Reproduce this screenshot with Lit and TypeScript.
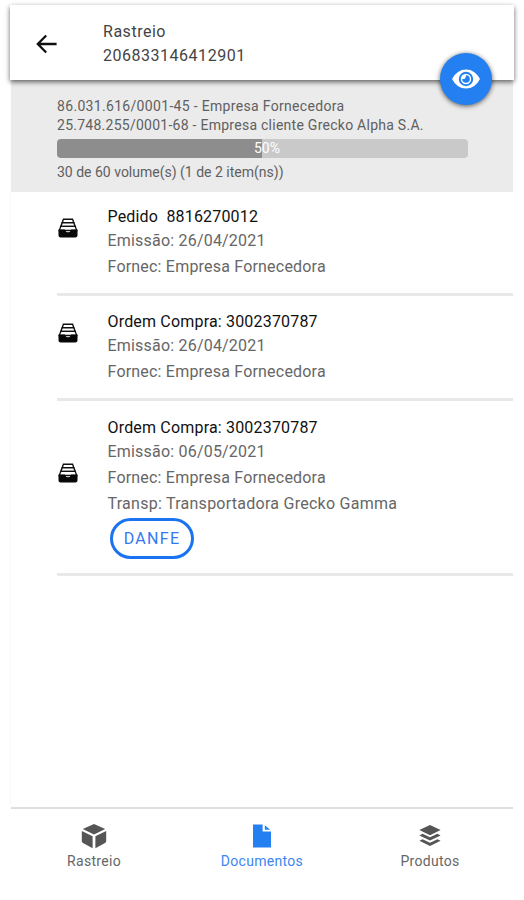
import { LitElement, html, css, svg, nothing } from "lit";
import { customElement, property } from "lit/decorators.js";
import { classMap } from "lit/directives/class-map.js";

interface Doc {
  title: string;
  lines: string[];
  action?: string;
}

const documents: Doc[] = [
  {
    title: "Pedido\u00a0 8816270012",
    lines: ["Emissão: 26/04/2021", "Fornec: Empresa Fornecedora"],
  },
  {
    title: "Ordem Compra: 3002370787",
    lines: ["Emissão: 26/04/2021", "Fornec: Empresa Fornecedora"],
  },
  {
    title: "Ordem Compra: 3002370787",
    lines: [
      "Emissão: 06/05/2021",
      "Fornec: Empresa Fornecedora",
      "Transp: Transportadora Grecko Gamma",
    ],
    action: "DANFE",
  },
];

const cube = svg`
  <path d="M13 0.9 24.2 6.1 13 11.5 1.8 6.1Z"/>
  <path d="M0.8 8 11.6 13.3V25.2L2 20.1Q0.8 19.4 0.8 18Z"/>
  <path d="M25.2 8 14.4 13.3V25.2L24 20.1Q25.2 19.4 25.2 18Z"/>`;

const page = svg`
  <path d="M4 1.5H13.6V8.4H22V24.5H4Z"/>
  <path d="M15.8 2.2 21.2 6.8H15.8Z"/>`;

const layers = svg`
  <path d="M13 2 23.6 7 13 12.2 2.4 7Z"/>
  <path d="M2.4 12.4 5.6 10.8 13 14.3 20.4 10.8 23.6 12.4 13 17.6Z"/>
  <path d="M2.4 17.8 5.6 16.2 13 19.7 20.4 16.2 23.6 17.8 13 23Z"/>`;

@customElement("doc-item")
export class DocItem extends LitElement {
  @property({ attribute: false }) doc!: Doc;

  static styles = css`
    :host {
      display: flex;
      align-items: center;
      margin-left: 46px;
      padding: 14.5px 0 13px;
      border-bottom: 3px solid #e8e8e8;
    }
    .tray {
      flex: none;
      width: 20px;
      height: 20px;
      margin: 0 29.5px 29px 1px;
    }
    .title {
      height: 23px;
      line-height: 23px;
      color: #111;
      letter-spacing: 0.18px;
    }
    .line {
      height: 26px;
      line-height: 26px;
      color: #666;
      letter-spacing: 0.2px;
    }
    .line:nth-child(4) {
      letter-spacing: 0.26px;
    }
    .action {
      display: block;
      box-sizing: border-box;
      width: 84px;
      height: 41px;
      margin: 1px 0 1px 2px;
      padding: 0 0 0 1px;
      border: 3px solid #1a73f0;
      border-radius: 21px;
      background: #fff;
      color: #3478f0;
      font: 16px Roboto, sans-serif;
      letter-spacing: 1.3px;
    }
  `;

  render() {
    const { title, lines, action } = this.doc;
    return html`
      <svg class="tray" viewBox="0 0 20 20">
        <path d="M5.4 1.2H14.6L15.8 4.7H4.2Z" fill="#fff" stroke="#111" stroke-width="1.4" />
        <path d="M4.2 4.7H15.8L17.2 8.4H2.8Z" fill="#fff" stroke="#111" stroke-width="1.4" />
        <path d="M2.8 8.4H17.2L18.8 12.5H1.2Z" fill="#fff" stroke="#111" stroke-width="1.3" />
        <path d="M0.5 11.4H6.8Q7.6 14.2 10 14.2T13.2 11.4H19.5V17.6Q19.5 19.4 17.7 19.4H2.3Q0.5 19.4 0.5 17.6Z" fill="#080808" />
      </svg>
      <div>
        <div class="title">${title}</div>
        ${lines.map((l) => html`<div class="line">${l}</div>`)}
        ${action ? html`<button class="action">${action}</button>` : nothing}
      </div>
    `;
  }
}

@customElement("app-root")
export class AppRoot extends LitElement {
  static styles = css`
    :host {
      display: flex;
      flex-direction: column;
      box-sizing: border-box;
      height: 900px;
      padding: 5px 10px 0;
      background: #fff;
      font: 16px Roboto, sans-serif;
      overflow: hidden;
    }
    .header {
      position: relative;
      z-index: 1;
      display: flex;
      align-items: center;
      flex: none;
      height: 75px;
      background: #fff;
      box-shadow: 0 2px 5px rgba(0, 0, 0, 0.6);
      color: #444;
    }
    .back {
      width: 22px;
      height: 20px;
      margin: 2px 45px 0 26px;
    }
    .heading {
      line-height: 24px;
      letter-spacing: 0.52px;
      padding-top: 2px;
    }
    .fab {
      position: absolute;
      right: 22px;
      bottom: -25px;
      display: grid;
      place-items: center;
      width: 52px;
      height: 52px;
      border-radius: 50%;
      background: #2480f0;
      box-shadow: 0 1px 5px rgba(0, 0, 0, 0.65);
    }
    .summary {
      flex: none;
      box-sizing: border-box;
      height: 112px;
      margin: 0 1px;
      padding: 16.5px 46px 0;
      background: #ebebeb;
      color: #606060;
      font-size: 14px;
      line-height: 19.5px;
      letter-spacing: 0.26px;
    }
    .supplier {
      letter-spacing: 0.32px;
    }
    .bar {
      display: grid;
      place-items: center;
      box-sizing: border-box;
      height: 19px;
      width: 411px;
      margin: 3.5px 0 5px;
      padding-left: 9px;
      border-radius: 4px;
      background: linear-gradient(to right, #8d8d8d 50%, #c9c9c9 50%);
      color: #fff;
      letter-spacing: 0;
    }
    .volumes {
      letter-spacing: 0;
    }
    .list {
      flex: 1;
      margin: 0 1px 0 0;
      border-left: 1px solid #f8f8f8;
    }
    .list doc-item:first-child {
      padding-top: 12.5px;
    }
    .tabs {
      display: grid;
      grid-template-columns: 166px 170px 166px;
      flex: none;
      box-sizing: border-box;
      height: 93px;
      margin: 0 1px;
      padding-top: 14px;
      border-top: 2px solid #dedede;
    }
    .tab {
      display: flex;
      flex-direction: column;
      align-items: center;
      color: #666;
      fill: #555;
      font-size: 14px;
      line-height: 20px;
      letter-spacing: 0.3px;
    }
    .tab.active {
      color: #3c86f2;
      fill: #2480f0;
    }
    .glyph {
      width: 26px;
      height: 26px;
      margin-bottom: 2px;
    }
  `;

  render() {
    const tabs = [
      { label: "Rastreio", icon: cube, active: false },
      { label: "Documentos", icon: page, active: true },
      { label: "Produtos", icon: layers, active: false },
    ];
    return html`
      <div class="header">
        <svg class="back" viewBox="0 0 22 20" fill="none" stroke="#111" stroke-width="2.3">
          <path d="M10.2 1.5 1.8 10 10.2 18.5M2 10H20.6" />
        </svg>
        <div class="heading">
          <div>Rastreio</div>
          <div>206833146412901</div>
        </div>
        <div class="fab">
          <svg width="30" height="22" viewBox="0 0 30 22">
            <path d="M1 11Q6 1.4 15 1.4T29 11Q24 20.6 15 20.6T1 11Z" fill="#fff" />
            <circle cx="15" cy="11" r="6.2" fill="none" stroke="#2480f0" stroke-width="2" />
            <path d="M15 7.2A3.8 3.8 0 1 1 11.2 11Q14.8 11.6 15 7.2Z" fill="#2480f0" />
          </svg>
        </div>
      </div>
      <div class="summary">
        <div class="supplier">86.031.616/0001-45 - Empresa Fornecedora</div>
        <div>25.748.255/0001-68 - Empresa cliente Grecko Alpha S.A.</div>
        <div class="bar">50%</div>
        <div class="volumes">30 de 60 volume(s) (1 de 2 item(ns))</div>
      </div>
      <div class="list">
        ${documents.map((d) => html`<doc-item .doc=${d}></doc-item>`)}
      </div>
      <div class="tabs">
        ${tabs.map(
          (t) => html`
            <div class=${classMap({ tab: true, active: t.active })}>
              <svg class="glyph" viewBox="0 0 26 26">${t.icon}</svg>
              <span>${t.label}</span>
            </div>
          `
        )}
      </div>
    `;
  }
}
